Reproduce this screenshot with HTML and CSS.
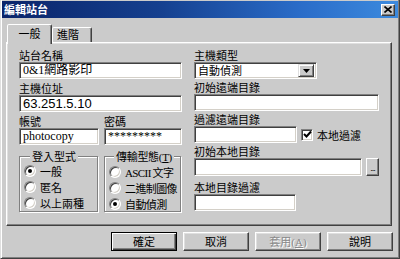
FILE: index.html
```html
<!DOCTYPE html>
<html lang="zh-Hant">
<head>
<meta charset="utf-8">
<title>編輯站台</title>
<link rel="stylesheet" href="styles.css">
</head>
<body>
<div class="window">
  <div class="titlebar">
    <span class="title">編輯站台</span>
    <span class="close"><svg width="8" height="7" viewBox="0 0 8 7"><path d="M0.5 0.5 L7.5 6.5 M7.5 0.5 L0.5 6.5" stroke="#000" stroke-width="1.6" fill="none"/></svg></span>
  </div>
  <div class="tabs">
    <div class="tab active">一般</div>
    <div class="tab">進階</div>
  </div>
  <div class="panel">
    <div class="col left">
      <div class="label">站台名稱</div>
      <div class="input serif gap2">0&amp;1網路影印</div>
      <div class="label">主機位址</div>
      <div class="input ip gap2">63.251.5.10</div>
      <div class="pair">
        <div class="field f-user">
          <div class="label">帳號</div>
          <div class="input serif">photocopy</div>
        </div>
        <div class="field f-pass">
          <div class="label">密碼</div>
          <div class="input serif">*********</div>
        </div>
      </div>
      <div class="groups">
        <fieldset class="group g-login">
          <legend>登入型式</legend>
          <div class="radio"><span class="dot on"></span><span>一般</span></div>
          <div class="radio"><span class="dot"></span><span>匿名</span></div>
          <div class="radio"><span class="dot"></span><span>以上兩種</span></div>
        </fieldset>
        <fieldset class="group g-mode">
          <legend>傳輸型態<span class="latin">(<u>T</u>)</span></legend>
          <div class="radio"><span class="dot"></span><span><span class="latin">ASCII</span> 文字</span></div>
          <div class="radio"><span class="dot"></span><span>二進制圖像</span></div>
          <div class="radio"><span class="dot on"></span><span>自動偵測</span></div>
        </fieldset>
      </div>
    </div>
    <div class="col right">
      <div class="label">主機類型</div>
      <div class="input select w-select">
        <span>自動偵測</span>
        <span class="arrow"><svg width="7" height="4" viewBox="0 0 7 4"><path d="M0 0 H7 L3.5 4 Z" fill="#000"/></svg></span>
      </div>
      <div class="label mt1">初始遠端目錄</div>
      <div class="input w-full"></div>
      <div class="label mt1">過濾遠端目錄</div>
      <div class="row">
        <div class="input w-filter"></div>
        <span class="check"><svg width="9" height="9" viewBox="0 0 9 9"><path d="M1 4 L3.5 6.5 L8 1.5" stroke="#000" stroke-width="2" fill="none"/></svg></span>
        <span class="check-label">本地過濾</span>
      </div>
      <div class="label mt1">初始本地目錄</div>
      <div class="row tall">
        <div class="input w-local"></div>
        <span class="browse">...</span>
      </div>
      <div class="label mt4">本地目錄過濾</div>
      <div class="input w-lfilter"></div>
    </div>
  </div>
  <div class="buttons">
    <div class="btn default">確定</div>
    <div class="btn">取消</div>
    <div class="btn disabled">套用<span class="latin">(<u>A</u>)</span></div>
    <div class="btn">說明</div>
  </div>
</div>
</body>
</html>
```
FILE: styles.css
```css
* { box-sizing: border-box; }
html, body { margin: 0; padding: 0; }
body {
  width: 400px;
  height: 259px;
  overflow: hidden;
  background: #cbcbcb;
  font: 11px "Noto Sans CJK TC", "Liberation Sans", sans-serif;
  color: #000;
}
.window {
  width: 400px;
  height: 259px;
  background: #cbcbcb;
  border: 1px solid;
  border-color: #dfdfdf #404040 #404040 #dfdfdf;
  border-top: 0;
  box-shadow: inset 1px 0 #fff, inset -1px -1px #808080;
  padding: 1px 1px 0 1px;
}
.titlebar {
  height: 17px;
  display: flex;
  align-items: center;
  justify-content: space-between;
  padding: 0 3px 0 2px;
  background: linear-gradient(to right, #0a246a 0%, #15408f 40%, #2a6cc8 75%, #3c8ade 100%);
}
.title {
  color: #fff;
  font-weight: bold;
  font-size: 11px;
  line-height: 13px;
}
.close {
  width: 14px;
  height: 12px;
  display: flex;
  align-items: center;
  justify-content: center;
  background: #cbcbcb;
  border: 1px solid;
  border-color: #fff #404040 #404040 #fff;
  box-shadow: inset -1px -1px #808080;
}
.tabs {
  display: flex;
  align-items: flex-end;
  height: 18px;
  margin-top: 6px;
  padding-left: 5px;
}
.tab {
  height: 15px;
  width: 40px;
  padding-left: 4px;
  line-height: 13px;
  border: 1px solid;
  border-bottom: 0;
  border-color: #fff #404040 transparent #fff;
  box-shadow: inset -1px 0 #808080;
  border-radius: 2px 2px 0 0;
  background: #cbcbcb;
}
.tab.active {
  position: relative;
  z-index: 1;
  width: 45px;
  height: 20px;
  margin-bottom: -2px;
  padding-left: 0;
  text-align: center;
  line-height: 16px;
}
.panel {
  margin-left: 4px;
  width: 386px;
  height: 184px;
  border: 1px solid;
  border-color: #fff #404040 #404040 #fff;
  box-shadow: inset -1px -1px #808080, inset 1px 1px #dfdfdf;
  padding: 5px 10px 0 12px;
  display: flex;
  gap: 12px;
}
.col { display: flex; flex-direction: column; }
.col.left { width: 163px; }
.col.right { width: 185px; }
.label {
  height: 14px;
  line-height: 14px;
  white-space: nowrap;
}
.mt1 { margin-top: 1px; }
.mt4 { margin-top: 4px; }
.gap2 { margin-bottom: 2px; }
.input {
  height: 17px;
  background: #fff;
  border: 1px solid;
  border-color: #808080 #fff #fff #808080;
  box-shadow: inset 1px 1px #404040, inset -1px -1px #d4d0c8;
  padding: 0 3px;
  line-height: 15px;
  white-space: nowrap;
  overflow: hidden;
}
.serif { font-family: "Liberation Serif", "Noto Sans CJK TC", serif; font-size: 12px; }
.ip { font-family: "Liberation Sans", sans-serif; font-size: 13px; }
.latin { font-family: "Liberation Serif", serif; font-size: 11px; }
.pair { display: flex; gap: 5px; }
.f-user { width: 80px; }
.f-pass { width: 78px; }
.field { display: flex; flex-direction: column; }
.groups { display: flex; gap: 6px; margin-top: 4px; }
.group {
  margin: 0;
  padding: 0 0 0 4px;
  min-inline-size: 0;
  height: 63px;
  border: 1px solid #808080;
  box-shadow: 1px 1px 0 #fff, inset 1px 1px 0 #fff;
}
.g-login { width: 79px; }
.g-mode { width: 77px; }
.g-mode .radio { letter-spacing: -0.6px; }
.group legend {
  padding: 0 2px;
  margin-left: 6px;
  line-height: 14px;
  background: #cbcbcb;
  white-space: nowrap;
}
.g-mode legend { margin-left: 5px; letter-spacing: -0.3px; }
.radio {
  height: 16px;
  display: flex;
  align-items: center;
  gap: 4px;
  white-space: nowrap;
}
.dot {
  flex: none;
  width: 12px;
  height: 12px;
  border-radius: 50%;
  background: #fff;
  border: 1px solid;
  border-color: #808080 #fff #fff #808080;
  box-shadow: inset 1px 1px #404040, inset -1px -1px #d4d0c8;
  display: flex;
  align-items: center;
  justify-content: center;
}
.dot.on::after {
  content: "";
  width: 4px;
  height: 4px;
  border-radius: 50%;
  background: #000;
}
.select {
  display: flex;
  align-items: center;
  justify-content: space-between;
  padding: 0 2px 0 3px;
}
.arrow {
  width: 16px;
  height: 13px;
  background: #cbcbcb;
  border: 1px solid;
  border-color: #dfdfdf #404040 #404040 #dfdfdf;
  box-shadow: inset 1px 1px #fff, inset -1px -1px #808080;
  display: flex;
  align-items: center;
  justify-content: center;
}
.w-select { width: 123px; }
.w-full { width: 185px; }
.w-filter { width: 103px; }
.w-local { width: 168px; height: 18px; }
.w-lfilter { width: 102px; }
.row { display: flex; align-items: center; }
.row.tall { height: 18px; }
.check {
  width: 12px;
  height: 12px;
  margin-left: 4px;
  background: #fff;
  border: 1px solid;
  border-color: #808080 #fff #fff #808080;
  box-shadow: inset 1px 1px #404040, inset -1px -1px #d4d0c8;
  display: flex;
  align-items: center;
  justify-content: center;
}
.check-label { margin-left: 4px; white-space: nowrap; }
.browse {
  width: 13px;
  height: 18px;
  margin-left: 4px;
  border: 1px solid;
  border-color: #fff #404040 #404040 #fff;
  box-shadow: inset -1px -1px #808080;
  font: 9px "Liberation Sans", sans-serif;
  line-height: 18px;
  text-align: center;
  letter-spacing: -1px;
}
.buttons {
  display: flex;
  justify-content: flex-end;
  gap: 6px;
  margin-top: 6px;
  padding-right: 5px;
}
.btn {
  width: 66px;
  height: 19px;
  line-height: 17px;
  text-align: center;
  border: 1px solid;
  border-color: #fff #404040 #404040 #fff;
  box-shadow: inset -1px -1px #808080, inset 1px 1px #dfdfdf;
}
.btn.default {
  border-color: #000;
  box-shadow: inset 1px 1px #fff, inset -1px -1px #404040, inset -2px -2px #808080;
}
.btn.disabled {
  color: #8a8a8a;
  text-shadow: 1px 1px #fff;
}
```
